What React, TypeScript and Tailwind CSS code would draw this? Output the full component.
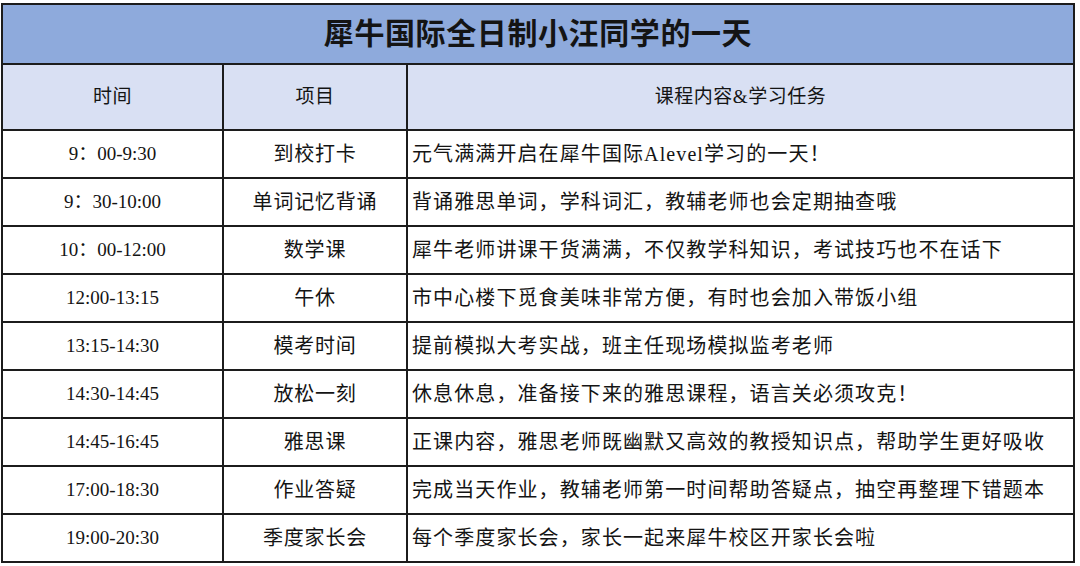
import * as React from "react";

const rows: [string, string, string][] = [
  ["9：00-9:30", "到校打卡", "元气满满开启在犀牛国际Alevel学习的一天！"],
  ["9：30-10:00", "单词记忆背诵", "背诵雅思单词，学科词汇，教辅老师也会定期抽查哦"],
  ["10：00-12:00", "数学课", "犀牛老师讲课干货满满，不仅教学科知识，考试技巧也不在话下"],
  ["12:00-13:15", "午休", "市中心楼下觅食美味非常方便，有时也会加入带饭小组"],
  ["13:15-14:30", "模考时间", "提前模拟大考实战，班主任现场模拟监考老师"],
  ["14:30-14:45", "放松一刻", "休息休息，准备接下来的雅思课程，语言关必须攻克！"],
  ["14:45-16:45", "雅思课", "正课内容，雅思老师既幽默又高效的教授知识点，帮助学生更好吸收"],
  ["17:00-18:30", "作业答疑", "完成当天作业，教辅老师第一时间帮助答疑点，抽空再整理下错题本"],
  ["19:00-20:30", "季度家长会", "每个季度家长会，家长一起来犀牛校区开家长会啦"],
];

export default function App() {
  return (
    <div className="h-[566px] w-[1080px] overflow-hidden bg-white pl-[1px] pt-[3px] font-['Liberation_Serif','Noto_Sans_CJK_SC',serif] text-[#141414]">
      <div className="w-[1074px] border-2 border-[#1c1c1c]">
        <div className="flex h-[60px] items-center justify-center border-b-2 border-[#1c1c1c] bg-[#8eaadc] pb-[2px] text-[30px] font-bold tracking-[0.6px]">
          犀牛国际全日制小汪同学的一天
        </div>
        <div className="grid h-[66px] grid-cols-[221px_184px_1fr] border-b-2 border-[#1c1c1c] bg-[#d9e0f3] text-[19px] tracking-[0.5px]">
          <div className="flex items-center justify-center border-r-2 border-[#1c1c1c]">时间</div>
          <div className="flex items-center justify-center border-r-2 border-[#1c1c1c]">项目</div>
          <div className="flex items-center justify-center">课程内容&amp;学习任务</div>
        </div>
        {rows.map(([time, item, desc], i) => (
          <div
            key={time}
            className={
              i < rows.length - 1
                ? "grid h-[48px] grid-cols-[221px_184px_1fr] border-b-2 border-[#1c1c1c]"
                : "grid h-[46px] grid-cols-[221px_184px_1fr]"
            }
          >
            <div className="flex items-center justify-center border-r-2 border-[#1c1c1c] text-[19px]">{time}</div>
            <div className="flex items-center justify-center border-r-2 border-[#1c1c1c] text-[20px] tracking-[0.8px]">
              {item}
            </div>
            <div className="flex items-center whitespace-nowrap pl-[4px] text-[20px] tracking-[1.1px]">{desc}</div>
          </div>
        ))}
      </div>
    </div>
  );
}
